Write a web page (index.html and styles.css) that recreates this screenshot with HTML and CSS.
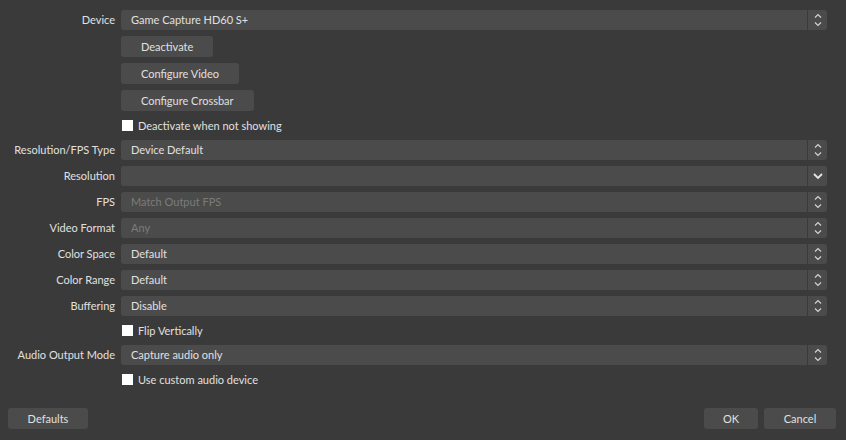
FILE: index.html
```html
<!DOCTYPE html>
<html>
<head>
<meta charset="utf-8">
<link rel="stylesheet" href="styles.css">
</head>
<body>
<div class="dialog">
  <div class="form">
    <div class="label">Device</div>
    <div class="combo"><span class="value">Game Capture HD60 S+</span><span class="spin"><svg width="8" height="14" viewBox="0 0 8 14"><path d="M1 4.5 L4 1.5 L7 4.5 M1 9.5 L4 12.5 L7 9.5" fill="none" stroke="#d6d6d6" stroke-width="1.1"/></svg></span></div>

    <div class="label"></div>
    <div class="field"><button class="btn">Deactivate</button></div>
    <div class="label"></div>
    <div class="field"><button class="btn">Configure Video</button></div>
    <div class="label"></div>
    <div class="field"><button class="btn">Configure Crossbar</button></div>
    <div class="label"></div>
    <label class="check"><span class="box"></span>Deactivate when not showing</label>

    <div class="label">Resolution/FPS Type</div>
    <div class="combo"><span class="value">Device Default</span><span class="spin"><svg width="8" height="14" viewBox="0 0 8 14"><path d="M1 4.5 L4 1.5 L7 4.5 M1 9.5 L4 12.5 L7 9.5" fill="none" stroke="#d6d6d6" stroke-width="1.1"/></svg></span></div>

    <div class="label">Resolution</div>
    <div class="combo"><span class="value"></span><span class="spin"><svg width="10" height="8" viewBox="0 0 10 8"><path d="M1 2 L5 6 L9 2" fill="none" stroke="#e6e6e6" stroke-width="1.8"/></svg></span></div>

    <div class="label">FPS</div>
    <div class="combo disabled"><span class="value">Match Output FPS</span><span class="spin"><svg width="8" height="14" viewBox="0 0 8 14"><path d="M1 4.5 L4 1.5 L7 4.5 M1 9.5 L4 12.5 L7 9.5" fill="none" stroke="#d6d6d6" stroke-width="1.1"/></svg></span></div>

    <div class="label">Video Format</div>
    <div class="combo disabled"><span class="value">Any</span><span class="spin"><svg width="8" height="14" viewBox="0 0 8 14"><path d="M1 4.5 L4 1.5 L7 4.5 M1 9.5 L4 12.5 L7 9.5" fill="none" stroke="#d6d6d6" stroke-width="1.1"/></svg></span></div>

    <div class="label">Color Space</div>
    <div class="combo"><span class="value">Default</span><span class="spin"><svg width="8" height="14" viewBox="0 0 8 14"><path d="M1 4.5 L4 1.5 L7 4.5 M1 9.5 L4 12.5 L7 9.5" fill="none" stroke="#d6d6d6" stroke-width="1.1"/></svg></span></div>

    <div class="label">Color Range</div>
    <div class="combo"><span class="value">Default</span><span class="spin"><svg width="8" height="14" viewBox="0 0 8 14"><path d="M1 4.5 L4 1.5 L7 4.5 M1 9.5 L4 12.5 L7 9.5" fill="none" stroke="#d6d6d6" stroke-width="1.1"/></svg></span></div>

    <div class="label">Buffering</div>
    <div class="combo"><span class="value">Disable</span><span class="spin"><svg width="8" height="14" viewBox="0 0 8 14"><path d="M1 4.5 L4 1.5 L7 4.5 M1 9.5 L4 12.5 L7 9.5" fill="none" stroke="#d6d6d6" stroke-width="1.1"/></svg></span></div>

    <div class="label"></div>
    <label class="check"><span class="box"></span>Flip Vertically</label>

    <div class="label">Audio Output Mode</div>
    <div class="combo"><span class="value">Capture audio only</span><span class="spin"><svg width="8" height="14" viewBox="0 0 8 14"><path d="M1 4.5 L4 1.5 L7 4.5 M1 9.5 L4 12.5 L7 9.5" fill="none" stroke="#d6d6d6" stroke-width="1.1"/></svg></span></div>

    <div class="label"></div>
    <label class="check"><span class="box"></span>Use custom audio device</label>
  </div>

  <div class="footer">
    <button class="btn defaults">Defaults</button>
    <div class="right">
      <button class="btn ok">OK</button>
      <button class="btn cancel">Cancel</button>
    </div>
  </div>
</div>
</body>
</html>
```

FILE: styles.css
```css
html, body {
  margin: 0;
  padding: 0;
  background: #3a3a3a;
}

body {
  font-family: Lato, "Noto Sans", "DejaVu Sans", sans-serif;
  font-size: 11px;
  color: #e0e0e0;
}

.dialog {
  width: 846px;
  height: 440px;
  display: flex;
  flex-direction: column;
  box-sizing: border-box;
}

.form {
  display: grid;
  grid-template-columns: 115px 1fr;
  column-gap: 6px;
  row-gap: 6px;
  padding: 10px 19px 0 0;
  align-items: center;
}

.label {
  text-align: right;
  white-space: nowrap;
  line-height: 20px;
}

.combo {
  height: 20px;
  background: #4b4b4b;
  border-radius: 3px;
  display: flex;
  align-items: stretch;
}

.combo .value {
  flex: 1;
  padding-left: 10px;
  line-height: 20px;
  white-space: nowrap;
}

.combo.disabled .value {
  color: #7b7b7b;
}

.combo .spin {
  width: 20px;
  border-left: 1px solid #3a3a3a;
  display: flex;
  align-items: center;
  justify-content: center;
  box-sizing: border-box;
}

.field {
  display: flex;
}

.btn {
  font-family: inherit;
  font-size: 11px;
  color: #e0e0e0;
  background: #4b4b4b;
  border: none;
  border-radius: 3px;
  height: 21px;
  padding: 0 20px;
  line-height: 21px;
  margin: 0;
  white-space: nowrap;
}

.check {
  display: flex;
  align-items: center;
  height: 17px;
  white-space: nowrap;
}

.check .box {
  width: 11px;
  height: 11px;
  background: #ffffff;
  margin-left: 1px;
  margin-right: 5px;
  flex: none;
}

.footer {
  margin-top: auto;
  display: flex;
  justify-content: space-between;
  padding: 0 10px 11px 8px;
}

.footer .right {
  display: flex;
  gap: 6px;
}

.defaults {
  width: 80px;
  padding: 0;
}

.ok {
  width: 54px;
  padding: 0;
}

.cancel {
  width: 72px;
  padding: 0;
}
```
